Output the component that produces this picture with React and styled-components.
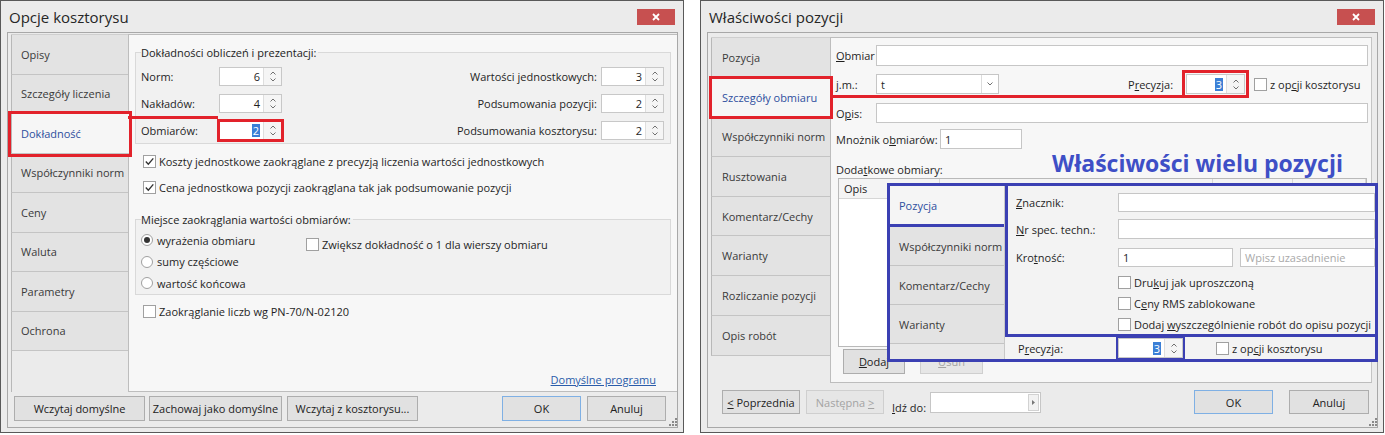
import React from 'react'
import styled, { createGlobalStyle, css } from 'styled-components'

const RED = '#e2222b'
const BLUE = '#3b40b3'

const GlobalStyle = createGlobalStyle`
  * { box-sizing: border-box; }
  body {
    margin: 0;
    background: #fff;
    font-family: 'Open Sans', 'Noto Sans', sans-serif;
    font-size: 11px;
    color: #1f1f1f;
  }
`

const Page = styled.div`
  display: flex;
  gap: 16px;
  width: 1385px;
  height: 435px;
  overflow: hidden;
`

const Dialog = styled.div`
  position: relative;
  width: 684px;
  height: 433px;
  flex: none;
  border: 1px solid #595959;
  background: #ebebeb;
  display: flex;
  flex-direction: column;
`

const TitleBar = styled.div`
  height: 31px;
  flex: none;
  display: flex;
  align-items: center;
  justify-content: space-between;
  padding: 0 8px 0 8px;
  font-size: 15px;
  color: #262626;
`

const CloseBtn = styled.div`
  width: 38px;
  height: 16px;
  background: #c75050;
  display: flex;
  align-items: center;
  justify-content: center;
`

const Frame = styled.div`
  flex: 1;
  min-height: 0;
  margin: 0 5px 4px 6px;
  border: 1px solid #a8a8a8;
  display: flex;
  flex-direction: column;
`

const Body = styled.div`
  flex: 1;
  min-height: 0;
  display: flex;
  margin: ${p => p.m};
`

const TabColumn = styled.div`
  width: ${p => p.w}px;
  flex: none;
  display: flex;
  flex-direction: column;
  border-top: 1px solid #cfcfcf;
`

const Tab = styled.div`
  height: ${p => p.h}px;
  flex: none;
  display: flex;
  align-items: center;
  padding-left: ${p => p.pl || 9}px;
  background: ${p => (p.active ? '#f6f6f6' : '#e3e3e3')};
  color: ${p => (p.active ? '#2e4f9e' : '#3a3a3a')};
  border-left: 1px solid #b8b8b8;
  border-bottom: 1px solid #c4c4c4;
  margin-right: ${p => (p.active ? '-1px' : '0')};
  position: relative;
  z-index: ${p => (p.active ? 2 : 0)};
  ${p => p.mark && css`
    outline: 3px solid ${RED};
    outline-offset: ${p.markOffset || 0}px;
  `}
`

const TabFiller = styled.div`
  flex: 1;
  border-left: ${p => (p.line ? '1px solid #b8b8b8' : 'none')};
`

const Content = styled.div`
  flex: 1;
  min-width: 0;
  display: flex;
  flex-direction: column;
  background: #f7f7f7;
  border: 1px solid #bdbdbd;
  border-right: ${p => (p.noRight ? 'none' : '1px solid #c4c4c4')};
  padding: ${p => p.pad};
`

const Group = styled.fieldset`
  margin: ${p => p.mt || 0}px 0 0;
  padding: ${p => p.pad};
  border: 1px solid #d9d9d9;
  background: #f1f1f1;
  min-width: 0;
`

const Legend = styled.legend`
  padding: 0 2px 0 0;
  line-height: 15px;
  color: #222;
`

const PrecGrid = styled.div`
  display: grid;
  grid-template-columns: 78px 63px 1fr auto 63px;
  grid-auto-rows: 19px;
  row-gap: 8px;
  align-items: center;
`

const RightLabel = styled.div`
  text-align: right;
  padding-right: 4px;
`

const Spin = styled.div`
  display: flex;
  width: ${p => p.w}px;
  height: ${p => p.h || 19}px;
  background: #fff;
  border: 1px solid #c8c8c8;
  flex: none;
  ${p => p.mark && css`
    outline: ${p.markWidth || 3}px solid ${p.mark};
    outline-offset: ${p.markOffset || 0}px;
  `}
`

const SpinValue = styled.div`
  flex: 1;
  display: flex;
  align-items: center;
  justify-content: flex-end;
  padding-right: 3px;
`

const SpinButtons = styled.div`
  width: 18px;
  flex: none;
  border-left: 1px solid #dedede;
  background: #f5f5f5;
  display: flex;
  flex-direction: column;
  align-items: center;
  justify-content: center;
  gap: 3px;
`

const Selected = styled.span`
  background: #3b7fd6;
  color: #fff;
  padding: 0 1px;
  line-height: 13px;
`

const CheckList = styled.div`
  display: flex;
  flex-direction: column;
  gap: ${p => p.gap}px;
  padding: ${p => p.pad || 0};
`

const CheckLabel = styled.div`
  display: flex;
  align-items: center;
  gap: 3px;
  height: 16px;
  margin: ${p => p.m || 0};
  color: ${p => (p.muted ? '#999' : 'inherit')};
  white-space: nowrap;
`

const Box = styled.span`
  width: 13px;
  height: 13px;
  flex: none;
  border: 1px solid #a0a0a0;
  background: #fff;
  display: inline-flex;
  align-items: center;
  justify-content: center;
`

const RadioDot = styled.span`
  width: 12px;
  height: 12px;
  flex: none;
  border-radius: 50%;
  border: 1px solid #a0a0a0;
  background: #fff;
  display: inline-flex;
  align-items: center;
  justify-content: center;
  &::after {
    content: '';
    width: 6px;
    height: 6px;
    border-radius: 50%;
    background: ${p => (p.on ? '#333' : 'transparent')};
  }
`

const RoundRow = styled.div`
  display: flex;
`

const RadioCol = styled.div`
  width: 165px;
  display: flex;
  flex-direction: column;
  gap: 5.5px;
`

const RadioLabel = styled.div`
  display: flex;
  align-items: center;
  gap: 4px;
  height: 16px;
`

const Link = styled.div`
  margin: auto 15px 4px 0;
  align-self: flex-end;
  color: #2a5caa;
  text-decoration: underline;
  line-height: 15px;
`

const Footer = styled.div`
  flex: none;
  height: ${p => p.h}px;
  display: flex;
  align-items: flex-start;
  padding: ${p => p.pad};
`

const Btn = styled.div`
  width: ${p => p.w}px;
  height: ${p => p.h || 25}px;
  flex: none;
  margin-left: ${p => (p.ml === 'auto' ? 'auto' : `${p.ml || 0}px`)};
  display: flex;
  align-items: center;
  justify-content: center;
  background: ${p => (p.disabled ? '#e6e6e6' : '#e1e1e1')};
  border: 1px solid ${p => (p.primary ? '#7fb0e4' : p.disabled ? '#cfcfcf' : '#adadad')};
  color: ${p => (p.disabled ? '#a3a3a3' : '#222')};
  white-space: nowrap;
`

const FieldRow = styled.div`
  display: flex;
  align-items: center;
  margin-top: ${p => p.mt || 0}px;
`

const FieldLabel = styled.div`
  width: ${p => p.w}px;
  flex: none;
  white-space: nowrap;
`

const TextInput = styled.div`
  height: ${p => p.h || 20}px;
  width: ${p => (p.w ? `${p.w}px` : 'auto')};
  flex: ${p => (p.w ? 'none' : 1)};
  margin-left: ${p => p.ml || 0}px;
  background: #fff;
  border: 1px solid #c6c6c6;
  display: flex;
  align-items: center;
  padding-left: 4px;
  color: ${p => (p.placeholder ? '#a9a9a9' : '#1f1f1f')};
`

const Combo = styled.div`
  width: 123px;
  height: 20px;
  flex: none;
  display: flex;
  background: #fff;
  border: 1px solid #c6c6c6;
`

const ComboText = styled.div`
  flex: 1;
  padding-left: 4px;
  display: flex;
  align-items: center;
`

const ComboBtn = styled.div`
  width: 17px;
  border-left: 1px solid #dcdcdc;
  display: flex;
  align-items: center;
  justify-content: center;
`

const PrecLabel = styled.div`
  margin-left: 129px;
  width: 58px;
  flex: none;
`

const SectionLabel = styled.div`
  margin-top: 13px;
  line-height: 16px;
`

const Table = styled.div`
  height: 169px;
  margin: 0 1px 0 2px;
  border: 1px solid #b9b9b9;
  background: #fff;
  flex: none;
`

const THead = styled.div`
  display: grid;
  grid-template-columns: 101px 273px 80px 1fr;
  height: 20px;
  background: #f4f4f4;
  border-bottom: 1px solid #d6d6d6;
`

const TH = styled.div`
  border-right: 1px solid #d6d6d6;
  padding-left: 5px;
  display: flex;
  align-items: center;
`

const ButtonRow = styled.div`
  display: flex;
  gap: 15px;
  margin: 2px 0 0 7px;
`

const GoTo = styled.div`
  width: 111px;
  height: 21px;
  margin: 2px 0 0 4px;
  display: flex;
  justify-content: flex-end;
  align-items: center;
  background: #fff;
  border: 1px solid #c6c6c6;
  padding-right: 1px;
`

const GoToBtn = styled.div`
  width: 11px;
  height: 17px;
  border: 1px solid #d2d2d2;
  background: #f2f2f2;
  display: flex;
  align-items: center;
  justify-content: center;
`

const GoLabel = styled.div`
  margin: 0 0 0 8px;
  align-self: center;
  margin-top: -2px;
`

const Connector = styled.div`
  position: absolute;
  left: ${p => p.x}px;
  top: ${p => p.y}px;
  width: ${p => p.w}px;
  height: 3px;
  background: ${RED};
  z-index: 3;
`

const OverlayTitle = styled.div`
  position: absolute;
  left: 351px;
  top: 148px;
  font-family: 'Open Sans', 'Noto Sans', sans-serif;
  font-weight: 700;
  font-size: 23px;
  line-height: 28px;
  color: #3e4fc6;
  z-index: 5;
  white-space: nowrap;
`

const Overlay = styled.div`
  position: absolute;
  left: 186px;
  top: 182px;
  width: 491px;
  height: 179px;
  border: 3px solid ${BLUE};
  background: #f3f3f3;
  display: flex;
  z-index: 5;
`

const OvTabs = styled.div`
  width: 115px;
  flex: none;
  display: flex;
  flex-direction: column;
  border-right: 1px solid #c8c8c8;
`

const OvTab = styled.div`
  height: ${p => p.h}px;
  flex: none;
  display: flex;
  align-items: center;
  padding-left: 9px;
  background: ${p => (p.active ? '#f5f5f5' : '#e3e3e3')};
  color: ${p => (p.active ? '#2e4f9e' : '#3a3a3a')};
  border-bottom: ${p => (p.active ? `3px solid ${BLUE}` : '1px solid #c4c4c4')};
`

const OvFiller = styled.div`
  flex: 1;
  background: #e8e8e8;
`

const OvRight = styled.div`
  flex: 1;
  min-width: 0;
  display: flex;
  flex-direction: column;
`

const OvForm = styled.div`
  height: 151px;
  flex: none;
  border-left: 3px solid ${BLUE};
  border-bottom: 3px solid ${BLUE};
  overflow: hidden;
  padding: 7px 0 0 8px;
`

const OvPrec = styled.div`
  flex: 1;
  display: flex;
  align-items: center;
  padding-left: 13px;
`

const Grip = styled.svg`
  position: absolute;
  right: 6px;
  bottom: 6px;
`

const Arrow = ({ down }) => (
  <svg width="6" height="4" viewBox="0 0 6 4">
    <path
      d={down ? 'M0.5 0.5 L3 3 L5.5 0.5' : 'M0.5 3.5 L3 1 L5.5 3.5'}
      fill="none"
      stroke="#707070"
      strokeWidth="1"
    />
  </svg>
)

const SpinBox = ({ value, selected, ...rest }) => (
  <Spin {...rest}>
    <SpinValue>{selected ? <Selected>{value}</Selected> : value}</SpinValue>
    <SpinButtons>
      <Arrow />
      <Arrow down />
    </SpinButtons>
  </Spin>
)

const Check = ({ checked, children, m, muted }) => (
  <CheckLabel m={m} muted={muted}>
    <Box>
      {checked && (
        <svg width="11" height="11" viewBox="0 0 11 11">
          <path d="M1.8 5.6 L4.3 8.2 L9.3 2.4" fill="none" stroke="#333" strokeWidth="1.4" />
        </svg>
      )}
    </Box>
    <span>{children}</span>
  </CheckLabel>
)

const Radio = ({ on, children }) => (
  <RadioLabel>
    <RadioDot on={on} />
    <span>{children}</span>
  </RadioLabel>
)

const Close = () => (
  <CloseBtn>
    <svg width="8" height="8" viewBox="0 0 8 8">
      <path d="M1 1 L7 7 M7 1 L1 7" stroke="#fff" strokeWidth="1.8" />
    </svg>
  </CloseBtn>
)

const ResizeGrip = () => (
  <Grip width="8" height="8" viewBox="0 0 8 8">
    {[[6, 0], [6, 3], [3, 3], [6, 6], [3, 6], [0, 6]].map(([x, y]) => (
      <rect key={`${x}-${y}`} x={x} y={y} width="2" height="2" fill="#8a8a8a" />
    ))}
  </Grip>
)

const leftTabs = ['Opisy', 'Szczegóły liczenia', 'Dokładność', 'Współczynniki norm', 'Ceny', 'Waluta', 'Parametry', 'Ochrona']
const rightTabs = ['Pozycja', 'Szczegóły obmiaru', 'Współczynniki norm', 'Rusztowania', 'Komentarz/Cechy', 'Warianty', 'Rozliczanie pozycji', 'Opis robót']

const OptionsDialog = () => (
  <Dialog>
    <TitleBar>
      <span>Opcje kosztorysu</span>
      <Close />
    </TitleBar>
    <Frame>
      <Body m="1px 0 0 3px">
        <TabColumn w={117}>
          {leftTabs.map(t => (
            <Tab key={t} h={39.5} active={t === 'Dokładność'} mark={t === 'Dokładność'}>
              {t}
            </Tab>
          ))}
          <TabFiller line />
        </TabColumn>
        <Content noRight pad="10px 6px 0 6px">
          <Group pad="7px 6px 3px 5px">
            <Legend>Dokładności obliczeń i prezentacji:</Legend>
            <PrecGrid>
              <div>Norm:</div>
              <SpinBox w={63} value="6" />
              <div />
              <RightLabel>Wartości jednostkowych:</RightLabel>
              <SpinBox w={63} value="3" />
              <div>Nakładów:</div>
              <SpinBox w={63} value="4" />
              <div />
              <RightLabel>Podsumowania pozycji:</RightLabel>
              <SpinBox w={63} value="2" />
              <div>Obmiarów:</div>
              <SpinBox w={63} value="2" selected mark={RED} markOffset={-1} />
              <div />
              <RightLabel>Podsumowania kosztorysu:</RightLabel>
              <SpinBox w={63} value="2" />
            </PrecGrid>
          </Group>
          <CheckList gap={10} pad="9px 0 0 8px">
            <Check checked>Koszty jednostkowe zaokrąglane z precyzją liczenia wartości jednostkowych</Check>
            <Check checked>Cena jednostkowa pozycji zaokrąglana tak jak podsumowanie pozycji</Check>
          </CheckList>
          <Group mt={17} pad="5px 6px 3px 5px">
            <Legend>Miejsce zaokrąglania wartości obmiarów:</Legend>
            <RoundRow>
              <RadioCol>
                <Radio on>wyrażenia obmiaru</Radio>
                <Radio>sumy częściowe</Radio>
                <Radio>wartość końcowa</Radio>
              </RadioCol>
              <Check m="4px 0 0 0">Zwiększ dokładność o 1 dla wierszy obmiaru</Check>
            </RoundRow>
          </Group>
          <Check m="8px 0 0 8px">Zaokrąglanie liczb wg PN-70/N-02120</Check>
          <Link>Domyślne programu</Link>
        </Content>
      </Body>
      <Footer h={35} pad="4px 11px 0 6px">
        <Btn w={131}>Wczytaj domyślne</Btn>
        <Btn w={133} ml={4}>Zachowaj jako domyślne</Btn>
        <Btn w={131} ml={5}>Wczytaj z kosztorysu...</Btn>
        <Btn w={79} ml="auto" primary>OK</Btn>
        <Btn w={79} ml={6}>Anuluj</Btn>
      </Footer>
    </Frame>
    <Connector x={127} y={115} w={90} />
    <ResizeGrip />
  </Dialog>
)

const PositionDialog = () => (
  <Dialog>
    <TitleBar>
      <span>Właściwości pozycji</span>
      <Close />
    </TitleBar>
    <Frame>
      <Body m="4px 5px 0 3px">
        <TabColumn w={119}>
          {rightTabs.map(t => (
            <Tab
              key={t}
              h={39.7}
              pl={10}
              active={t === 'Szczegóły obmiaru'}
              mark={t === 'Szczegóły obmiaru'}
              markOffset={-1}
            >
              {t}
            </Tab>
          ))}
          <TabFiller />
        </TabColumn>
        <Content pad="0 3px 0 5px">
          <FieldRow mt={7}>
            <FieldLabel w={40}><u>O</u>bmiar</FieldLabel>
            <TextInput h={21} />
          </FieldRow>
          <FieldRow mt={8}>
            <FieldLabel w={40}><u>j</u>.m.:</FieldLabel>
            <Combo>
              <ComboText>t</ComboText>
              <ComboBtn><Arrow down /></ComboBtn>
            </Combo>
            <PrecLabel>P<u>r</u>ecyzja:</PrecLabel>
            <SpinBox w={59} h={20} value="3" selected mark={RED} markOffset={1} />
            <Check m="0 0 0 9px">z op<u>c</u>ji kosztorysu</Check>
          </FieldRow>
          <FieldRow mt={9}>
            <FieldLabel w={40}>O<u>p</u>is:</FieldLabel>
            <TextInput />
          </FieldRow>
          <FieldRow mt={6}>
            <FieldLabel w={104}>Mnożnik o<u>b</u>miarów:</FieldLabel>
            <TextInput w={82}>1</TextInput>
          </FieldRow>
          <SectionLabel>Doda<u>t</u>kowe obmiary:</SectionLabel>
          <Table>
            <THead>
              <TH>Opis</TH>
              <TH />
              <TH />
              <TH />
            </THead>
          </Table>
          <ButtonRow>
            <Btn w={62}><u>D</u>odaj</Btn>
            <Btn w={63} disabled><u>U</u>suń</Btn>
          </ButtonRow>
        </Content>
      </Body>
      <Footer h={44} pad="7px 8px 0 14px">
        <Btn w={78} h={24}><u>&lt;</u>&nbsp;Poprzednia</Btn>
        <Btn w={78} h={24} ml={6} disabled>Następna&nbsp;<u>&gt;</u></Btn>
        <GoLabel><u>I</u>dź do:</GoLabel>
        <GoTo>
          <GoToBtn>
            <svg width="3" height="5" viewBox="0 0 3 5"><path d="M0 0 L3 2.5 L0 5 Z" fill="#777" /></svg>
          </GoToBtn>
        </GoTo>
        <Btn w={79} h={24} ml="auto" primary>OK</Btn>
        <Btn w={80} h={24} ml={16}>Anuluj</Btn>
      </Footer>
    </Frame>
    <Connector x={129} y={94} w={353} />
    <OverlayTitle>Właściwości wielu pozycji</OverlayTitle>
    <Overlay>
      <OvTabs>
        <OvTab h={41} active>Pozycja</OvTab>
        <OvTab h={39}>Współczynniki norm</OvTab>
        <OvTab h={39}>Komentarz/Cechy</OvTab>
        <OvTab h={39}>Warianty</OvTab>
        <OvFiller />
      </OvTabs>
      <OvRight>
        <OvForm>
          <FieldRow>
            <FieldLabel w={102}><u>Z</u>nacznik:</FieldLabel>
            <TextInput h={19} />
          </FieldRow>
          <FieldRow mt={7}>
            <FieldLabel w={102}><u>N</u>r spec. techn.:</FieldLabel>
            <TextInput />
          </FieldRow>
          <FieldRow mt={9}>
            <FieldLabel w={102}>Kro<u>t</u>ność:</FieldLabel>
            <TextInput w={115} h={19}>1</TextInput>
            <TextInput h={19} ml={7} placeholder>Wpisz uzasadnienie</TextInput>
          </FieldRow>
          <CheckList gap={5} pad="7px 0 0 102px">
            <Check>Dru<u>k</u>uj jak uproszczoną</Check>
            <Check>C<u>e</u>ny RMS zablokowane</Check>
            <Check>Dodaj <u>w</u>yszczególnienie robót do opisu pozycji</Check>
          </CheckList>
        </OvForm>
        <OvPrec>
          <FieldLabel w={100}>P<u>r</u>ecyzja:</FieldLabel>
          <SpinBox w={65} h={20} value="3" selected mark={BLUE} markWidth={2} />
          <Check m="0 0 0 33px">z op<u>c</u>ji kosztorysu</Check>
        </OvPrec>
      </OvRight>
    </Overlay>
    <ResizeGrip />
  </Dialog>
)

export default function App() {
  return (
    <>
      <GlobalStyle />
      <Page>
        <OptionsDialog />
        <PositionDialog />
      </Page>
    </>
  )
}
